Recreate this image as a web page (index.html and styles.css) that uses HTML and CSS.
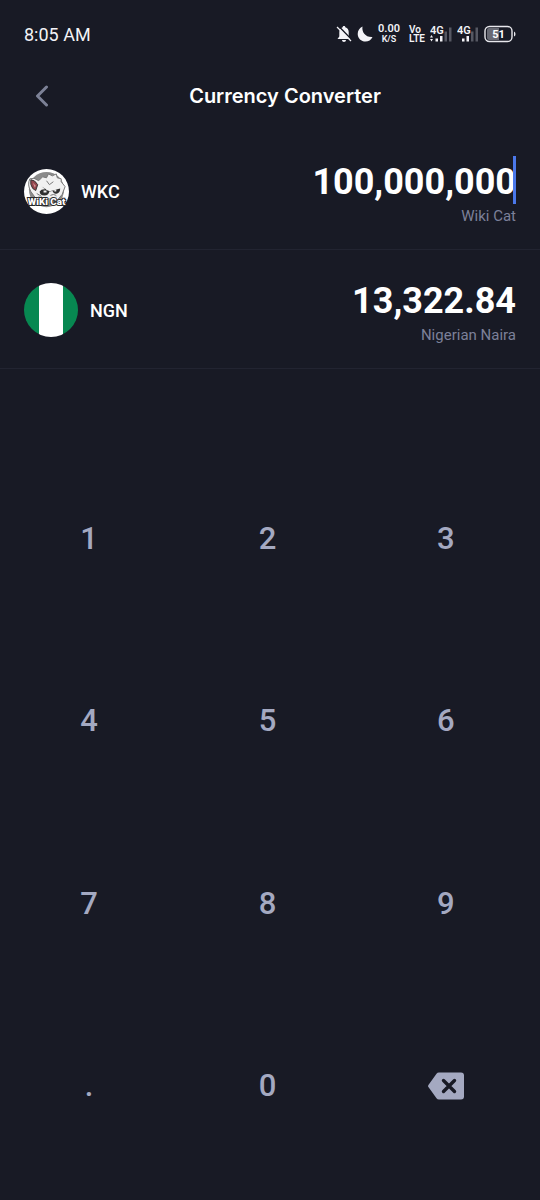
FILE: index.html
```html
<!DOCTYPE html>
<html lang="en">
<head>
<meta charset="utf-8">
<meta name="viewport" content="width=device-width, initial-scale=1">
<title>Currency Converter</title>
<link rel="stylesheet" href="styles.css">
</head>
<body>
<div class="status">
  <time class="clock">8:05 AM</time>
  <div class="indicators">
    <svg class="bell" viewBox="0 0 16 18" width="16" height="18" aria-hidden="true">
      <path fill="#f3f3f7" d="M8 1c-.8 0-1.300.5-1.300 1.200C4.400 2.800 3.300 4.700 3.300 7v4.500L1.500 14h13l-1.800-2.500V7c0-2.300-1.100-4.200-3.400-4.800C9.300 1.500 8.800 1 8 1zM6 15h4c0 1.300-.9 2-2 2s-2-.7-2-2z"/>
      <path d="M2.500 1l13 13.500" stroke="#181a25" stroke-width="1.500"/>
      <path d="M1 2l14 14" stroke="#f3f3f7" stroke-width="1.300"/>
    </svg>
    <svg class="moon" viewBox="0 0 16 16" width="16" height="16" aria-hidden="true">
      <path fill="#f3f3f7" d="M5.500.5C4.500 6 8.500 11.500 15.500 11c-1.400 3-4 4.600-7 4.600C4.300 15.600.7 12.300.7 8 .7 4.600 2.600 1.700 5.500.5z"/>
    </svg>
    <div class="stack speed"><b>0.00</b><small>K/S</small></div>
    <div class="stack volte"><b>Vo</b><b>LTE</b></div>
    <svg class="signal" viewBox="0 0 22 18" width="22" height="18" role="img" aria-label="4G signal">
      <path fill="#f3f3f7" d="M0 12.500l1.500-2.500L3 12.500zM0 14l1.500 2.500L3 14zM5.500 13.500H8v3H5.500zM10 11h2.500v5.500H10z"/>
      <path fill="#565863" d="M14.500 6.500H17v10h-2.500zM19 2.500h2.500v14H19z"/>
      <text x="0" y="9" class="net">4G</text>
    </svg>
    <svg class="signal" viewBox="0 0 22 18" width="22" height="18" role="img" aria-label="4G signal">
      <path fill="#f3f3f7" d="M5 13.500h2.500v3H5zM9.500 11H12v5.500H9.500z"/>
      <path fill="#565863" d="M14 6.500h2.500v10H14zM18.500 2.500H21v14h-2.500z"/>
      <text x="0" y="9" class="net">4G</text>
    </svg>
    <svg class="battery" viewBox="0 0 32 18" width="32" height="18" role="img" aria-label="Battery 51%">
      <path d="M5 3h10v12H5a2 2 0 0 1-2-2V5a2 2 0 0 1 2-2z" fill="#686a74"/>
      <rect x="1" y="1.500" width="27" height="15" rx="4.500" fill="none" stroke="#e8e8ed" stroke-width="1.400"/>
      <path d="M30 6.500q1.500.5 1.500 2.500t-1.500 2.500z" fill="#e8e8ed"/>
      <text x="14.500" y="13" text-anchor="middle" class="level">51</text>
    </svg>
  </div>
</div>

<header class="header">
  <button class="back" type="button" aria-label="Back">
    <svg viewBox="0 0 14 22" width="14" height="22" aria-hidden="true"><path d="M11.500 2L2.500 11l9 9" fill="none" stroke="#7c8196" stroke-width="3" stroke-linecap="round" stroke-linejoin="round"/></svg>
  </button>
  <h1 class="title">Currency Converter</h1>
</header>

<main class="converter">
  <section class="row">
    <button class="currency" type="button">
      <svg viewBox="0 0 46 46" width="45" height="45" aria-hidden="true">
        <circle cx="23" cy="23" r="23" fill="#fff"/>
        <circle cx="23" cy="21" r="18" fill="#8b8b8b"/>
        <path d="M6 10q4-2 9 2l4-4 4 1 2-4 4 2 4-2 1 4 4 1v3l4 5-3 8-5 6-11 2-11-4-5-7q-4-7-1-13z" fill="#f1f1f1" stroke="#777" stroke-width="1"/>
        <path d="M7 11q4 0 7 5l-2 6-3-2q-3-4-2-9z" fill="#93454d" stroke="#333" stroke-width="1"/>
        <path d="M9 14l3 3-1 2z" fill="#d79597"/>
        <path d="M18 18l5 3q-5-1-7 2 0 4 5 4 4 0 5-4l3-1q1 4 5 3 3-1 3-5l-4 1-6 2-5-2z" fill="#303030"/>
        <path d="M20 23h3M31 22h2" stroke="#eee" stroke-width="2"/>
        <path d="M23 12l3 4 4-3M13 25l5 3M27 27l3-1 3 1" stroke="#777" fill="none"/>
        <path d="M14 27l5 2 6 1 9-2-4 7H18z" fill="#bcbcbc"/>
        <text x="23" y="37" text-anchor="middle" class="coin">WiKi Cat</text>
      </svg>
      <span>WKC</span>
    </button>
    <div class="value">
      <div class="entry">
        <input class="amount" id="from" type="text" inputmode="none" value="100,000,000" aria-label="Amount in Wiki Cat">
        <span class="caret"></span>
      </div>
      <label class="name" for="from">Wiki Cat</label>
    </div>
  </section>
  <section class="row">
    <button class="currency" type="button">
      <span class="flag"></span>
      <span>NGN</span>
    </button>
    <div class="value">
      <input class="amount" id="to" type="text" inputmode="none" value="13,322.84" aria-label="Amount in Nigerian Naira">
      <label class="name" for="to">Nigerian Naira</label>
    </div>
  </section>
</main>

<div class="keypad">
  <button type="button">1</button>
  <button type="button">2</button>
  <button type="button">3</button>
  <button type="button">4</button>
  <button type="button">5</button>
  <button type="button">6</button>
  <button type="button">7</button>
  <button type="button">8</button>
  <button type="button">9</button>
  <button type="button">.</button>
  <button type="button">0</button>
  <button type="button" aria-label="Delete">
    <svg viewBox="0 0 36 28" width="36" height="28" aria-hidden="true">
      <path fill="#a4a9c1" d="M11 .5h22a3 3 0 0 1 3 3v21a3 3 0 0 1-3 3H11a3 3 0 0 1-2.500-1.300L.6 15.300a2 2 0 0 1 0-2.600L8.500 1.800A3 3 0 0 1 11 .5z"/>
      <path d="M15.500 8.500l11 11m0-11l-11 11" stroke="#181a25" stroke-width="3.400" stroke-linecap="round"/>
    </svg>
  </button>
</div>
</body>
</html>
```

FILE: styles.css
```css
* {
  box-sizing: border-box;
}

body {
  margin: 0;
  min-height: 100vh;
  display: flex;
  flex-direction: column;
  background: #181a25;
  color: #fff;
  font-family: Roboto, "Liberation Sans", sans-serif;
}

button,
input {
  padding: 0;
  border: 0;
  background: none;
  color: inherit;
  font: inherit;
}

button {
  cursor: pointer;
}

svg {
  display: block;
  flex: none;
}

.status {
  display: flex;
  align-items: center;
  justify-content: space-between;
  height: 68px;
  padding: 0 24px;
}

.clock {
  font-size: 18px;
  color: #f3f3f7;
}

.indicators {
  display: flex;
  align-items: center;
  gap: 5px;
}

.stack {
  display: flex;
  flex-direction: column;
  align-items: center;
  font-size: 10px;
  line-height: 9px;
  color: #f3f3f7;
}

.stack b {
  font-weight: 600;
}

.stack small {
  font-size: 9px;
  font-weight: 600;
}

.speed {
  line-height: 10px;
}

.speed b {
  font-size: 11px;
}

.volte {
  align-items: flex-start;
  padding-left: 4px;
}

.net {
  font: 600 11px Roboto, sans-serif;
  fill: #f3f3f7;
  stroke: #181a25;
  stroke-width: 1px;
  paint-order: stroke;
}

.level {
  font: 700 11px Roboto, sans-serif;
  fill: #fff;
}

.coin {
  font: 900 10px Roboto, sans-serif;
  fill: #fff;
  stroke: #292929;
  stroke-width: 2px;
  paint-order: stroke;
}

.header {
  display: grid;
  grid-template-columns: 36px 1fr 36px;
  align-items: center;
  height: 56px;
  margin-bottom: 7px;
  padding: 0 24px;
}

.back {
  display: flex;
  align-items: center;
  justify-content: center;
  height: 44px;
}

.title {
  margin: 0;
  padding-left: 30px;
  text-align: center;
  font: 600 20px/28px Inter, sans-serif;
}

.row {
  display: flex;
  align-items: center;
  justify-content: space-between;
  gap: 24px;
  padding: 25px 24px 23px;
  border-bottom: 1px solid #222431;
}

.currency {
  display: flex;
  align-items: center;
  gap: 12px;
  font-size: 18px;
  font-weight: 500;
}

.flag {
  width: 54px;
  height: 54px;
  border-radius: 50%;
  background: linear-gradient(90deg, #078851 28%, #fff 28% 73%, #078851 73%);
}

.value {
  display: flex;
  flex: 1;
  flex-direction: column;
  min-width: 0;
  gap: 2px;
  text-align: right;
}

.entry {
  position: relative;
}

.amount {
  display: block;
  width: 100%;
  height: 48px;
  padding-top: 4px;
  text-align: right;
  font-size: 36px;
  font-weight: 700;
  outline: 0;
}

.caret {
  position: absolute;
  top: 0;
  right: 0;
  width: 3px;
  height: 100%;
  background: #4b78ea;
}

.name {
  font-size: 15px;
  line-height: 20px;
  color: #7c8099;
}

.keypad {
  display: grid;
  flex: 1;
  grid-template-columns: repeat(3, 1fr);
  grid-auto-rows: 1fr;
  margin-top: 78px;
  padding: 0 5px 23px 0;
  color: #a4a9c1;
  font-size: 31px;
  font-weight: 500;
}

.keypad button {
  display: flex;
  align-items: center;
  justify-content: center;
}
```
